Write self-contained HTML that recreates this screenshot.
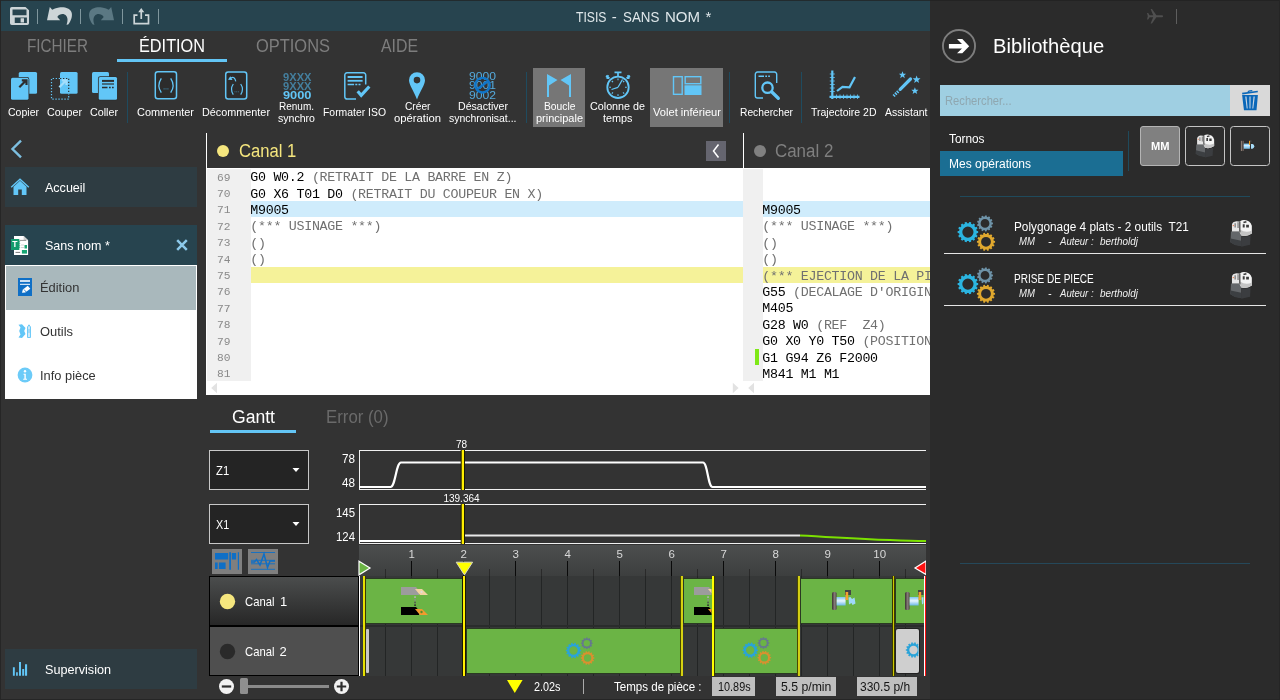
<!DOCTYPE html>
<html lang="fr"><head><meta charset="utf-8"><title>TISIS - SANS NOM *</title>
<style>
html,body{margin:0;padding:0}
body{width:1280px;height:700px;overflow:hidden;background:#333333;font-family:"Liberation Sans",sans-serif;position:relative}
.t{position:absolute;white-space:nowrap;margin:0;transform-origin:0 50%}
.r{position:absolute;display:block}
.g{position:absolute;left:0;top:0;width:0;height:0;display:block}
#app{position:absolute;left:0;top:0;width:1280px;height:700px;overflow:hidden;background:#333333;will-change:transform;-webkit-font-smoothing:antialiased}
</style></head><body><div id="app">
<header id="titlebar" class="g">
<div class="r" style="left:0px;top:0px;width:930px;height:31px;background:#27444f;"></div>
<svg class="r" style="left:10px;top:7px;" width="19" height="18" viewBox="0 0 19 18"><path fill="#cdd5d8" fill-rule="evenodd" d="M1.800 0H15.500l3.500 3.200V16.200a1.800 1.800 0 0 1-1.800 1.800H1.800A1.800 1.800 0 0 1 0 16.200V1.800A1.800 1.800 0 0 1 1.800 0zM2.500 2.400v5.850h14v-5.850zM4.750 10.500v5.600h12.150v-5.600zM10.600 11.300h3.400v4.200h-3.400z"/></svg>
<div class="r" style="left:37px;top:9px;width:1px;height:15px;background:#7f969d;"></div>
<div class="r" style="left:80px;top:9px;width:1px;height:15px;background:#7f969d;"></div>
<div class="r" style="left:122px;top:9px;width:1px;height:15px;background:#7f969d;"></div>
<div class="r" style="left:158px;top:9px;width:1px;height:15px;background:#7f969d;"></div>
<svg class="r" style="left:46px;top:6px;" width="27" height="20" viewBox="46 6 27 20"><path fill="#cdd5d8" d="M49.800 7 47 20.200H60.200L57.300 16.900C59 14.500 62 13.500 64.500 14.500 67.500 15.800 68.500 19.500 66.500 24.800L68.200 24.600C71.500 20 72.800 15.500 71.400 12 69.800 8.300 65 6.800 59 7.500 56 7.900 53.500 9 52.200 9.800Z"/></svg>
<svg class="r" style="left:88px;top:6px;" width="27" height="20" viewBox="88 6 27 20"><path fill="#5b7883" transform="translate(161,0) scale(-1,1)" d="M49.800 7 47 20.200H60.200L57.300 16.900C59 14.500 62 13.500 64.500 14.500 67.500 15.800 68.500 19.500 66.500 24.800L68.200 24.600C71.500 20 72.800 15.500 71.400 12 69.800 8.300 65 6.800 59 7.500 56 7.900 53.500 9 52.200 9.800Z"/></svg>
<svg class="r" style="left:132px;top:7px;" width="19" height="18" viewBox="0 0 19 18"><path fill="none" stroke="#cdd5d8" stroke-width="1.700" d="M5.500 8.200H2.200v8.500h14.300v-8.500h-3.500"/><path fill="#cdd5d8" d="M9.250 1 12.300 5.300h-2.200v6.700h-1.700v-6.700h-2.200z"/></svg>
<div class="t" style="left:576.00px;top:6.50px;font-size:15px;line-height:20px;color:#dfe7ea;transform:scaleX(0.8132);">TISIS</div>
<div class="t" style="left:611.80px;top:6.50px;font-size:15px;line-height:20px;color:#dfe7ea;">-</div>
<div class="t" style="left:622.70px;top:6.50px;font-size:15px;line-height:20px;color:#dfe7ea;transform:scaleX(0.8887);">SANS</div>
<div class="t" style="left:665.00px;top:6.50px;font-size:15px;line-height:20px;color:#dfe7ea;transform:scaleX(1.0001);">NOM</div>
<div class="t" style="left:705.40px;top:6.50px;font-size:15px;line-height:20px;color:#dfe7ea;">*</div>
<div class="t" style="left:27.00px;top:34.76px;font-size:18px;line-height:23px;color:#7d7d7d;transform:scaleX(0.8472);">FICHIER</div>
<div class="t" style="left:139.00px;top:34.76px;font-size:18px;line-height:23px;color:#ffffff;transform:scaleX(0.9041);">ÉDITION</div>
<div class="t" style="left:256.00px;top:34.76px;font-size:18px;line-height:23px;color:#7d7d7d;transform:scaleX(0.9135);">OPTIONS</div>
<div class="t" style="left:381.00px;top:34.76px;font-size:18px;line-height:23px;color:#7d7d7d;transform:scaleX(0.8807);">AIDE</div>
<div class="r" style="left:117px;top:59px;width:110px;height:3px;background:#63c5f5;"></div>
</header>
<nav id="ribbon" class="g">
<div class="r" style="left:533px;top:68px;width:52px;height:59px;background:#767676;"></div>
<div class="r" style="left:650px;top:68px;width:73px;height:59px;background:#767676;"></div>
<div class="r" style="left:127px;top:72px;width:1px;height:51px;background:#1f4b5f;"></div>
<div class="r" style="left:526px;top:72px;width:1px;height:51px;background:#1f4b5f;"></div>
<div class="r" style="left:729px;top:72px;width:1px;height:51px;background:#1f4b5f;"></div>
<div class="r" style="left:801px;top:72px;width:1px;height:51px;background:#1f4b5f;"></div>
<svg class="r" style="left:10px;top:71px;" width="28" height="30" viewBox="0 0 28 30"><rect x="8.75" y="1" width="18.3" height="21.700" rx="1.500" fill="#62c6f7"/><rect x="1" y="6.750" width="17.500" height="22" rx="1.500" fill="#62c6f7" stroke="#2e2e2e" stroke-width="1.600" paint-order="stroke"/><path d="M9.300 16.200 16 9.500M11.800 9.300h4.700v4.700" stroke="#2e2e2e" stroke-width="2.200" fill="none"/></svg>
<div class="t" style="left:8.00px;top:105.19px;font-size:11px;line-height:14px;color:#ffffff;transform:scaleX(0.9567);">Copier</div>
<svg class="r" style="left:50px;top:71px;" width="29" height="30" viewBox="0 0 29 30"><rect x="10" y="1" width="17.600" height="21.700" rx="1.500" fill="#62c6f7"/><path d="M10 7.500H1.500V28.100H18.700V22.700" fill="none" stroke="#62c6f7" stroke-width="1.200" stroke-dasharray="1.300 1.700"/><path d="M10 7.500H18.700V22.700" fill="none" stroke="#2e2e2e" stroke-width="1.200" stroke-dasharray="1.300 1.700"/><path d="M9.300 16.200 16 9.500M11.800 9.300h4.700v4.700" stroke="#a4defb" stroke-width="2.200" fill="none"/></svg>
<div class="t" style="left:46.50px;top:105.19px;font-size:11px;line-height:14px;color:#ffffff;transform:scaleX(0.9701);">Couper</div>
<svg class="r" style="left:91px;top:71px;" width="27" height="30" viewBox="0 0 27 30"><rect x="1" y="1" width="17" height="21" rx="1.500" fill="#62c6f7"/><rect x="7.750" y="6" width="18.300" height="22.700" rx="1.500" fill="#62c6f7" stroke="#2e2e2e" stroke-width="1.600" paint-order="stroke"/><path d="M11 9.900h12" stroke="#2e2e2e" stroke-width="2"/><path d="M11 13h12" stroke="#2e2e2e" stroke-width="1.200"/><path d="M11 16.400h5.500M18 16.400h1.700M21 16.400h1.700" stroke="#2e2e2e" stroke-width="1.500"/></svg>
<div class="t" style="left:90.00px;top:105.19px;font-size:11px;line-height:14px;color:#ffffff;transform:scaleX(0.9746);">Coller</div>
<svg class="r" style="left:153px;top:70px;" width="26" height="31" viewBox="0 0 26 31"><rect x="2.300" y="1.700" width="21.200" height="27" rx="2.500" fill="#2c2c2c" stroke="#62c6f7" stroke-width="1.500"/><path d="M8.300 8.300q-4.800 7.200 0 14.400M17.700 8.300q4.800 7.200 0 14.400" fill="none" stroke="#62c6f7" stroke-width="1.300"/><path d="M10.500 18.800h5" stroke="#3b6f88" stroke-width="1.200" stroke-dasharray="1.200 .7"/></svg>
<div class="t" style="left:137.00px;top:105.19px;font-size:11px;line-height:14px;color:#ffffff;transform:scaleX(0.9920);">Commenter</div>
<svg class="r" style="left:223px;top:70px;" width="26" height="31" viewBox="0 0 26 31"><rect x="2.700" y="2.100" width="21" height="27" rx="2.500" fill="#2c2c2c" stroke="#62c6f7" stroke-width="1.500"/><path d="M10.300 14q-3.600 5.300 0 10.600M17.700 14q3.600 5.300 0 10.600" fill="none" stroke="#62c6f7" stroke-width="1.200"/><path d="M11.500 21.800h4.500" stroke="#3b6f88" stroke-width="1" stroke-dasharray="1 .7"/><path d="M5 9.700 7.300 6.300 9.500 10z" fill="#62c6f7"/><path d="M8 8Q11.500 6 12.800 11.300" fill="none" stroke="#62c6f7" stroke-width="1.200"/></svg>
<div class="t" style="left:202.00px;top:105.19px;font-size:11px;line-height:14px;color:#ffffff;transform:scaleX(0.9844);">Décommenter</div>
<div class="t" style="left:282.50px;top:69.69px;font-size:11px;line-height:14px;color:#447f9e;transform:scaleX(1.0132);font-weight:700;">9XXX</div>
<div class="t" style="left:282.50px;top:78.99px;font-size:11px;line-height:14px;color:#447f9e;transform:scaleX(1.0132);font-weight:700;">9XXX</div>
<div class="t" style="left:282.50px;top:88.39px;font-size:11px;line-height:14px;color:#62c6f7;transform:scaleX(1.1646);font-weight:700;">9000</div>
<div class="t" style="left:279.00px;top:98.79px;font-size:11px;line-height:14px;color:#ffffff;transform:scaleX(0.9087);">Renum.</div>
<div class="t" style="left:278.00px;top:110.79px;font-size:11px;line-height:14px;color:#ffffff;transform:scaleX(0.9606);">synchro</div>
<svg class="r" style="left:343px;top:70px;" width="29" height="31" viewBox="0 0 29 31"><path d="M13 29H4a2.200 2.200 0 0 1-2.200-2.200V5A2.200 2.200 0 0 1 4 2.800h16.500a2.200 2.200 0 0 1 2.200 2.200V14.500" fill="none" stroke="#62c6f7" stroke-width="1.500"/><path d="M4.600 7h15" stroke="#62c6f7" stroke-width="2"/><path d="M4.600 10.800h15" stroke="#62c6f7" stroke-width="1.800"/><path d="M4.600 14.500h6.500M12.300 14.500h2M15.500 14.500h2" stroke="#62c6f7" stroke-width="1.600"/><path d="M14.700 21.300 18.200 25.300 26.300 16.500" fill="none" stroke="#62c6f7" stroke-width="3.200"/></svg>
<div class="t" style="left:323.00px;top:105.19px;font-size:11px;line-height:14px;color:#ffffff;transform:scaleX(0.9456);">Formater ISO</div>
<svg class="r" style="left:408px;top:71px;" width="18" height="30" viewBox="0 0 18 30"><path fill-rule="evenodd" fill="#62c6f7" d="M9 1.200a8 8 0 0 1 8 8c0 4.500-5 11-8 19.300C6 20.200 1 13.700 1 9.200a8 8 0 0 1 8-8zm0 4.600a3.300 3.300 0 1 0 0 6.600 3.300 3.300 0 0 0 0-6.600z"/></svg>
<div class="t" style="left:404.50px;top:98.79px;font-size:11px;line-height:14px;color:#ffffff;transform:scaleX(0.9271);">Créer</div>
<div class="t" style="left:394.00px;top:110.79px;font-size:11px;line-height:14px;color:#ffffff;transform:scaleX(1.0246);">opération</div>
<div class="t" style="left:469.00px;top:68.72px;font-size:11.5px;line-height:15px;color:#55aadc;transform:scaleX(1.0554);">9000</div>
<div class="t" style="left:469.00px;top:78.12px;font-size:11.5px;line-height:15px;color:#55aadc;transform:scaleX(1.0554);">9001</div>
<div class="t" style="left:469.00px;top:87.52px;font-size:11.5px;line-height:15px;color:#55aadc;transform:scaleX(1.0554);">9002</div>
<svg class="r" style="left:473px;top:76px;" width="19" height="19" viewBox="0 0 19 19"><circle cx="9.500" cy="9.200" r="7.300" fill="none" stroke="#0f75c8" stroke-width="2.300"/><path d="M4.500 13 14.500 5.500" stroke="#0f75c8" stroke-width="2.300"/></svg>
<div class="t" style="left:457.50px;top:98.79px;font-size:11px;line-height:14px;color:#ffffff;transform:scaleX(0.9623);">Désactiver</div>
<div class="t" style="left:448.50px;top:110.79px;font-size:11px;line-height:14px;color:#ffffff;transform:scaleX(0.9518);">synchronisat...</div>
<svg class="r" style="left:546px;top:73px;" width="26" height="25" viewBox="0 0 26 25"><path fill="#62c6f7" d="M1 1l10.500 6L3 12.500V24H1zM25 1 14.500 7 23 12.500V24h2z"/></svg>
<div class="t" style="left:543.50px;top:98.79px;font-size:11px;line-height:14px;color:#ffffff;transform:scaleX(0.9366);">Boucle</div>
<div class="t" style="left:535.50px;top:110.79px;font-size:11px;line-height:14px;color:#ffffff;transform:scaleX(0.9982);">principale</div>
<svg class="r" style="left:604px;top:70px;" width="28" height="31" viewBox="0 0 28 31"><circle cx="14" cy="17.300" r="10.700" fill="none" stroke="#62c6f7" stroke-width="1.800"/><path d="M10.500 2.300h7M14 2.300v4.500M4.300 5.200l-1.800 3.300M2 5.800l3.500 2.500M23.700 5.200l1.800 3.300M26 5.800l-3.500 2.500" stroke="#62c6f7" stroke-width="1.700" fill="none"/><path d="M14 17.300 18.500 9.500M14 17.300 7.500 19.500" stroke="#62c6f7" stroke-width="1.300" fill="none"/><path d="M14 8.500v1.800M14 24.300v1.800M5.200 17.300h1.800M21 17.300h1.800M7.800 11l1.200 1.200M20.200 11 19 12.200M7.800 23.600 9 22.400M20.200 23.600 19 22.400" stroke="#62c6f7" stroke-width="1.100"/></svg>
<div class="t" style="left:590.00px;top:98.79px;font-size:11px;line-height:14px;color:#ffffff;transform:scaleX(0.9775);">Colonne de</div>
<div class="t" style="left:603.00px;top:110.79px;font-size:11px;line-height:14px;color:#ffffff;transform:scaleX(0.9848);">temps</div>
<svg class="r" style="left:672px;top:75px;" width="31" height="21" viewBox="0 0 31 21"><rect x="1.500" y="1.700" width="8.700" height="17.600" fill="none" stroke="#62c6f7" stroke-width="1.400"/><rect x="13.200" y="1.700" width="15.600" height="7" fill="none" stroke="#62c6f7" stroke-width="1.400"/><rect x="12.500" y="10.300" width="17" height="9.700" fill="#62c6f7"/></svg>
<div class="t" style="left:653.00px;top:105.19px;font-size:11px;line-height:14px;color:#ffffff;transform:scaleX(1.0110);">Volet inférieur</div>
<svg class="r" style="left:753px;top:70px;" width="28" height="31" viewBox="0 0 28 31"><path d="M10 28H4.500a2.200 2.200 0 0 1-2.200-2.200V4.200A2.200 2.200 0 0 1 4.500 2h17a2.200 2.200 0 0 1 2.200 2.200V13" fill="none" stroke="#62c6f7" stroke-width="1.400"/><path d="M5.500 6.200h5.500M12.300 6.200h1.700M15.200 6.200h1.700" stroke="#62c6f7" stroke-width="1.600"/><circle cx="14.500" cy="17.700" r="5.200" fill="none" stroke="#62c6f7" stroke-width="2.300"/><path d="M18.600 21.800 25.300 28.300" stroke="#62c6f7" stroke-width="3.300" stroke-linecap="round"/></svg>
<div class="t" style="left:739.50px;top:105.19px;font-size:11px;line-height:14px;color:#ffffff;transform:scaleX(0.9321);">Rechercher</div>
<svg class="r" style="left:828px;top:69px;" width="33" height="32" viewBox="0 0 33 32"><path d="M4.300 1.500v28.500M1.500 27.800h30" stroke="#62c6f7" stroke-width="2.200" fill="none"/><path d="M1.800 5h5M1.800 8.500h5M1.800 12h5M1.800 15.500h5M1.800 19h5M1.800 22.500h5M8.500 25.500v4.500M12 25.500v4.500M15.500 25.500v4.500M19 25.500v4.500M22.500 25.500v4.500M26 25.500v4.500M29.500 25.500v4.500" stroke="#62c6f7" stroke-width="1" opacity=".8"/><path d="M9 22 14.500 17.800l7 .500L27 8" fill="none" stroke="#62c6f7" stroke-width="2.200"/></svg>
<div class="t" style="left:811.00px;top:105.19px;font-size:11px;line-height:14px;color:#ffffff;transform:scaleX(0.9538);">Trajectoire 2D</div>
<svg class="r" style="left:890px;top:71px;" width="32" height="29" viewBox="0 0 32 29"><path d="M3.600 25 9 19.600" stroke="#62c6f7" stroke-width="3" stroke-dasharray="1.500 1"/><path d="M10.200 18.400 20.500 8" stroke="#62c6f7" stroke-width="3.200" stroke-linecap="round"/><path fill="#62c6f7" d="M0-3 .8-.9 3-.9 1.300.5 1.900 2.700 0 1.400-1.900 2.700-1.300.5-3-.9-.8-.9z" transform="translate(12.500,3.900) scale(1.200)"/><path fill="#62c6f7" d="M0-3 .8-.9 3-.9 1.300.5 1.900 2.700 0 1.400-1.900 2.700-1.300.5-3-.9-.8-.9z" transform="translate(26.600,8.500) scale(1.300)"/><path fill="#62c6f7" d="M0-3 .8-.9 3-.9 1.300.5 1.900 2.700 0 1.400-1.900 2.700-1.300.5-3-.9-.8-.9z" transform="translate(24.900,19.800) scale(1.200)"/></svg>
<div class="t" style="left:885.00px;top:105.19px;font-size:11px;line-height:14px;color:#ffffff;transform:scaleX(0.9523);">Assistant</div>
</nav>
<nav id="sidebar" class="g">
<svg class="r" style="left:9px;top:138px;" width="16" height="22" viewBox="0 0 16 22"><path d="M12 2.700 3.500 11l8.500 8.300" fill="none" stroke="#7dbfe0" stroke-width="2.400"/></svg>
<div class="r" style="left:5px;top:167px;width:192px;height:40px;background:#2e3c42;"></div>
<svg class="r" style="left:10px;top:178px;" width="20" height="18" viewBox="0 0 20 18"><path fill="#62c6f7" d="M10 2.800 3.500 8.800V17h4.700v-5.500h3.600V17h4.700V8.800z"/><path d="M1.200 9.300 10 1.300l8.800 8" fill="none" stroke="#62c6f7" stroke-width="1.400"/></svg>
<div class="t" style="left:45.20px;top:179.20px;font-size:13px;line-height:17px;color:#ffffff;transform:scaleX(0.9640);">Accueil</div>
<div class="r" style="left:5px;top:225px;width:192px;height:40px;background:#27444f;"></div>
<svg class="r" style="left:10px;top:235px;" width="19" height="21" viewBox="0 0 19 21"><path d="M4 1h9.600l4.500 4.300V20H4z" fill="#fff"/><path d="M13.600 1v4.300h4.500z" fill="#cfcfcf"/><rect x="1" y="4" width="8.300" height="11" fill="#139b6d"/><path d="M9.300 5.500l1 .8-1 1 1 1-1 1 1 1-1 1 1 1-1 1z" fill="#139b6d"/><path d="M9.800 5.400h6.400" stroke="#7a7a7a" stroke-width=".8"/><path d="M11 10h3M11 12.500h3" stroke="#c8c8c8" stroke-width=".8"/><path d="M5.500 17.400h4.600" stroke="#7a7a7a" stroke-width="1"/><path d="M11.900 15h5.100v3.600h-5.100z" fill="#17a673"/><path d="M14.500 10h2.500v3.500h-2.500z" fill="#17a673"/></svg>
<div class="t" style="left:12.30px;top:239.15px;font-size:8.5px;line-height:11px;color:#ffffff;font-weight:700;">T</div>
<div class="t" style="left:45.20px;top:237.00px;font-size:13px;line-height:17px;color:#ffffff;transform:scaleX(0.9642);">Sans nom *</div>
<svg class="r" style="left:175px;top:238px;" width="14" height="14" viewBox="0 0 14 14"><path d="M2.200 2.200 11.800 11.800M11.800 2.200 2.200 11.800" stroke="#8cc9ea" stroke-width="2.500"/></svg>
<div class="r" style="left:5px;top:265px;width:192px;height:134px;background:#ffffff;"></div>
<div class="r" style="left:6px;top:266px;width:190px;height:44px;background:#a9b8bc;"></div>
<svg class="r" style="left:18px;top:278px;" width="14" height="18" viewBox="0 0 14 18"><rect width="14" height="18" fill="#0f6fc6"/><path d="M2 3h10" stroke="#fff" stroke-width="1.600"/><path d="M2 6.300h10" stroke="#fff" stroke-width="1"/><path d="M4 14.800 4.800 11.600 9.800 7.800 12.300 10.800 7.300 14.600z" fill="#fff"/><path d="M6 11.500 8.200 14" stroke="#0f6fc6" stroke-width=".8"/></svg>
<div class="t" style="left:40.00px;top:279.00px;font-size:13px;line-height:17px;color:#333333;transform:scaleX(0.9912);">Édition</div>
<svg class="r" style="left:18px;top:324px;" width="15" height="15" viewBox="0 0 15 15"><path d="M.5.800 4 .2 7.500 4 6.200 7 7.500 10 4 14 .5 13.500 2.500 10.500 1.200 7 2.500 3.500z" fill="#62c6f7"/><path d="M9.500 3 11 .8 12.500 3v10.500h-3z" fill="#cfeaf9" stroke="#62c6f7" stroke-width=".9"/><path d="M11 5v4" stroke="#62c6f7" stroke-width=".8"/></svg>
<div class="t" style="left:40.00px;top:323.00px;font-size:13px;line-height:17px;color:#333333;transform:scaleX(0.9931);">Outils</div>
<svg class="r" style="left:17px;top:367px;" width="16" height="16" viewBox="0 0 16 16"><circle cx="8" cy="8" r="7.400" fill="#6ccbf8"/><circle cx="8" cy="4.300" r="1.200" fill="#fff"/><path d="M6.500 6.800h2.300v5h1.200v1h-3.800v-1h1.200v-4h-.9z" fill="#fff"/></svg>
<div class="t" style="left:40.30px;top:366.60px;font-size:13px;line-height:17px;color:#333333;transform:scaleX(0.9880);">Info pièce</div>
<div class="r" style="left:5px;top:649px;width:192px;height:40px;background:#2e3c42;"></div>
<svg class="r" style="left:12px;top:660px;" width="16" height="18" viewBox="0 0 16 18"><path fill="#62c6f7" d="M.9 7.200h1.900v8.600H.9zM4.100 12.300h1.700v3.500H4.100zM7 2h2v13.800H7zM10.200 9h2v6.800h-2zM13 4.200h2.100v11.600H13z"/></svg>
<div class="t" style="left:45.00px;top:660.80px;font-size:13px;line-height:17px;color:#ffffff;transform:scaleX(0.9716);">Supervision</div>
</nav>
<main id="editors" class="g">
<div class="r" style="left:206px;top:133px;width:1px;height:262px;background:#ffffff;"></div>
<div class="r" style="left:207px;top:168px;width:536px;height:227px;background:#ffffff;"></div>
<div class="r" style="left:207px;top:169px;width:44px;height:212px;background:#f0f0f0;"></div>
<div class="r" style="left:251px;top:201.0px;width:492px;height:16.4px;background:#cfecfc;"></div>
<div class="r" style="left:251px;top:266.59999999999997px;width:492px;height:16.4px;background:#f5f299;"></div>
<svg class="r" style="left:216px;top:144px;" width="14" height="14" viewBox="0 0 14 14"><circle cx="7" cy="7" r="6" fill="#f5e67e"/></svg>
<div class="t" style="left:239.20px;top:139.56px;font-size:18px;line-height:23px;color:#f5e67e;transform:scaleX(0.9236);">Canal 1</div>
<div class="r" style="left:706px;top:141px;width:20px;height:20px;background:#65656f;"></div>
<svg class="r" style="left:706px;top:141px;" width="20" height="20" viewBox="0 0 20 20"><path d="M12.500 3.500 7.500 10l5 6.500" fill="none" stroke="#fff" stroke-width="1.500"/></svg>
<div class="t" style="left:217.00px;top:170.56px;font-size:11.4px;line-height:15px;color:#8a8a8a;transform:scaleX(0.9867);font-family:'Liberation Mono',monospace;">69</div>
<div class="t" style="left:217.00px;top:186.96px;font-size:11.4px;line-height:15px;color:#8a8a8a;transform:scaleX(0.9867);font-family:'Liberation Mono',monospace;">70</div>
<div class="t" style="left:217.00px;top:203.36px;font-size:11.4px;line-height:15px;color:#8a8a8a;transform:scaleX(0.9867);font-family:'Liberation Mono',monospace;">71</div>
<div class="t" style="left:217.00px;top:219.76px;font-size:11.4px;line-height:15px;color:#8a8a8a;transform:scaleX(0.9867);font-family:'Liberation Mono',monospace;">72</div>
<div class="t" style="left:217.00px;top:236.16px;font-size:11.4px;line-height:15px;color:#8a8a8a;transform:scaleX(0.9867);font-family:'Liberation Mono',monospace;">73</div>
<div class="t" style="left:217.00px;top:252.56px;font-size:11.4px;line-height:15px;color:#8a8a8a;transform:scaleX(0.9867);font-family:'Liberation Mono',monospace;">74</div>
<div class="t" style="left:217.00px;top:268.96px;font-size:11.4px;line-height:15px;color:#8a8a8a;transform:scaleX(0.9867);font-family:'Liberation Mono',monospace;">75</div>
<div class="t" style="left:217.00px;top:285.36px;font-size:11.4px;line-height:15px;color:#8a8a8a;transform:scaleX(0.9867);font-family:'Liberation Mono',monospace;">76</div>
<div class="t" style="left:217.00px;top:301.76px;font-size:11.4px;line-height:15px;color:#8a8a8a;transform:scaleX(0.9867);font-family:'Liberation Mono',monospace;">77</div>
<div class="t" style="left:217.00px;top:318.16px;font-size:11.4px;line-height:15px;color:#8a8a8a;transform:scaleX(0.9867);font-family:'Liberation Mono',monospace;">78</div>
<div class="t" style="left:217.00px;top:334.56px;font-size:11.4px;line-height:15px;color:#8a8a8a;transform:scaleX(0.9867);font-family:'Liberation Mono',monospace;">79</div>
<div class="t" style="left:217.00px;top:350.96px;font-size:11.4px;line-height:15px;color:#8a8a8a;transform:scaleX(0.9867);font-family:'Liberation Mono',monospace;">80</div>
<div class="t" style="left:217.00px;top:367.36px;font-size:11.4px;line-height:15px;color:#8a8a8a;transform:scaleX(0.9867);font-family:'Liberation Mono',monospace;">81</div>
<div class="t" style="left:250.30px;top:169.15px;font-size:13.3px;line-height:17px;color:#000000;font-family:'Liberation Mono',monospace;letter-spacing:-0.28px;white-space:pre;">G0 W0.2 </div>
<div class="t" style="left:311.90px;top:169.15px;font-size:13.3px;line-height:17px;color:#707070;font-family:'Liberation Mono',monospace;letter-spacing:-0.28px;white-space:pre;">(RETRAIT DE LA BARRE EN Z)</div>
<div class="t" style="left:250.30px;top:185.55px;font-size:13.3px;line-height:17px;color:#000000;font-family:'Liberation Mono',monospace;letter-spacing:-0.28px;white-space:pre;">G0 X6 T01 D0 </div>
<div class="t" style="left:350.40px;top:185.55px;font-size:13.3px;line-height:17px;color:#707070;font-family:'Liberation Mono',monospace;letter-spacing:-0.28px;white-space:pre;">(RETRAIT DU COUPEUR EN X)</div>
<div class="t" style="left:250.30px;top:201.95px;font-size:13.3px;line-height:17px;color:#000000;font-family:'Liberation Mono',monospace;letter-spacing:-0.28px;white-space:pre;">M9005</div>
<div class="t" style="left:250.30px;top:218.35px;font-size:13.3px;line-height:17px;color:#707070;font-family:'Liberation Mono',monospace;letter-spacing:-0.28px;white-space:pre;">(*** USINAGE ***)</div>
<div class="t" style="left:250.30px;top:234.75px;font-size:13.3px;line-height:17px;color:#707070;font-family:'Liberation Mono',monospace;letter-spacing:-0.28px;white-space:pre;">()</div>
<div class="t" style="left:250.30px;top:251.15px;font-size:13.3px;line-height:17px;color:#707070;font-family:'Liberation Mono',monospace;letter-spacing:-0.28px;white-space:pre;">()</div>
<svg class="r" style="left:210px;top:382px;" width="8" height="12" viewBox="0 0 8 12"><path d="M7 .8 1.200 6l5.800 5.200z" fill="#e2e2e2"/></svg>
<div class="r" style="left:743px;top:133px;width:1px;height:35px;background:#ffffff;"></div>
<div class="r" style="left:743px;top:168px;width:187px;height:227px;background:#ffffff;"></div>
<div class="r" style="left:743px;top:169px;width:20px;height:212px;background:#f0f0f0;"></div>
<div class="r" style="left:763px;top:201.0px;width:167px;height:16.4px;background:#cfecfc;"></div>
<div class="r" style="left:763px;top:266.59999999999997px;width:167px;height:16.4px;background:#f5f299;"></div>
<svg class="r" style="left:753px;top:144px;" width="14" height="14" viewBox="0 0 14 14"><circle cx="7" cy="7" r="6" fill="#808080"/></svg>
<div class="t" style="left:775.20px;top:139.56px;font-size:18px;line-height:23px;color:#7f7f7f;transform:scaleX(0.9397);">Canal 2</div>
<div class="r" style="left:762px;top:168px;width:168px;height:227px;overflow:hidden">
<div class="t" style="left:0.30px;top:33.95px;font-size:13.3px;line-height:17px;color:#000000;font-family:'Liberation Mono',monospace;letter-spacing:-0.28px;white-space:pre;">M9005</div>
<div class="t" style="left:0.30px;top:50.35px;font-size:13.3px;line-height:17px;color:#707070;font-family:'Liberation Mono',monospace;letter-spacing:-0.28px;white-space:pre;">(*** USINAGE ***)</div>
<div class="t" style="left:0.30px;top:66.75px;font-size:13.3px;line-height:17px;color:#707070;font-family:'Liberation Mono',monospace;letter-spacing:-0.28px;white-space:pre;">()</div>
<div class="t" style="left:0.30px;top:83.15px;font-size:13.3px;line-height:17px;color:#707070;font-family:'Liberation Mono',monospace;letter-spacing:-0.28px;white-space:pre;">()</div>
<div class="t" style="left:0.30px;top:99.55px;font-size:13.3px;line-height:17px;color:#707070;font-family:'Liberation Mono',monospace;letter-spacing:-0.28px;white-space:pre;">(*** EJECTION DE LA PIECE ***)</div>
<div class="t" style="left:0.30px;top:115.95px;font-size:13.3px;line-height:17px;color:#000000;font-family:'Liberation Mono',monospace;letter-spacing:-0.28px;white-space:pre;">G55 </div>
<div class="t" style="left:31.10px;top:115.95px;font-size:13.3px;line-height:17px;color:#707070;font-family:'Liberation Mono',monospace;letter-spacing:-0.28px;white-space:pre;">(DECALAGE D'ORIGINE)</div>
<div class="t" style="left:0.30px;top:132.35px;font-size:13.3px;line-height:17px;color:#000000;font-family:'Liberation Mono',monospace;letter-spacing:-0.28px;white-space:pre;">M405</div>
<div class="t" style="left:0.30px;top:148.75px;font-size:13.3px;line-height:17px;color:#000000;font-family:'Liberation Mono',monospace;letter-spacing:-0.28px;white-space:pre;">G28 W0 </div>
<div class="t" style="left:54.20px;top:148.75px;font-size:13.3px;line-height:17px;color:#707070;font-family:'Liberation Mono',monospace;letter-spacing:-0.28px;white-space:pre;">(REF  Z4)</div>
<div class="t" style="left:0.30px;top:165.15px;font-size:13.3px;line-height:17px;color:#000000;font-family:'Liberation Mono',monospace;letter-spacing:-0.28px;white-space:pre;">G0 X0 Y0 T50 </div>
<div class="t" style="left:100.40px;top:165.15px;font-size:13.3px;line-height:17px;color:#707070;font-family:'Liberation Mono',monospace;letter-spacing:-0.28px;white-space:pre;">(POSITIONNEMENT)</div>
<div class="t" style="left:0.30px;top:181.55px;font-size:13.3px;line-height:17px;color:#000000;font-family:'Liberation Mono',monospace;letter-spacing:-0.28px;white-space:pre;">G1 G94 Z6 F2000</div>
<div class="t" style="left:0.30px;top:197.95px;font-size:13.3px;line-height:17px;color:#000000;font-family:'Liberation Mono',monospace;letter-spacing:-0.28px;white-space:pre;">M841 M1 M1</div>
</div>
<div class="r" style="left:755px;top:348.59999999999997px;width:4px;height:16.4px;background:#7fe817;"></div>
<svg class="r" style="left:731.5px;top:382px;" width="8" height="12" viewBox="0 0 8 12"><path d="M.8 .8l5.800 5.200-5.800 5.200z" fill="#e2e2e2"/></svg>
<svg class="r" style="left:747px;top:382px;" width="8" height="12" viewBox="0 0 8 12"><path d="M7 .8 1.200 6l5.800 5.200z" fill="#e2e2e2"/></svg>
</main>
<section id="gantt" class="g">
<div class="t" style="left:231.50px;top:405.96px;font-size:18px;line-height:23px;color:#ffffff;transform:scaleX(0.9767);">Gantt</div>
<div class="t" style="left:325.50px;top:405.96px;font-size:18px;line-height:23px;color:#6a6a6a;transform:scaleX(0.9328);">Error (0)</div>
<div class="r" style="left:210px;top:430px;width:86px;height:3px;background:#63c5f5;"></div>
<div class="r" style="left:209px;top:450px;width:100px;height:40px;background:#242424;box-sizing:border-box;border:1px solid #c8c8c8;"></div>
<div class="t" style="left:215.50px;top:461.50px;font-size:13px;line-height:17px;color:#ffffff;transform:scaleX(0.8701);">Z1</div>
<svg class="r" style="left:292px;top:467px;" width="8" height="6" viewBox="0 0 8 6"><path d="M.5 1h7L4 5z" fill="#fff"/></svg>
<div class="r" style="left:209px;top:504px;width:100px;height:40px;background:#242424;box-sizing:border-box;border:1px solid #c8c8c8;"></div>
<div class="t" style="left:215.50px;top:515.50px;font-size:13px;line-height:17px;color:#ffffff;transform:scaleX(0.8301);">X1</div>
<svg class="r" style="left:292px;top:521px;" width="8" height="6" viewBox="0 0 8 6"><path d="M.5 1h7L4 5z" fill="#fff"/></svg>
<div class="t" style="left:342.00px;top:451.34px;font-size:12px;line-height:16px;color:#ffffff;transform:scaleX(0.9739);">78</div>
<div class="t" style="left:342.00px;top:475.04px;font-size:12px;line-height:16px;color:#ffffff;transform:scaleX(0.9739);">48</div>
<div class="t" style="left:336.00px;top:505.34px;font-size:12px;line-height:16px;color:#ffffff;transform:scaleX(0.9490);">145</div>
<div class="t" style="left:336.00px;top:528.84px;font-size:12px;line-height:16px;color:#ffffff;transform:scaleX(0.9490);">124</div>
<div class="t" style="left:455.94px;top:438.03px;font-size:10px;line-height:13px;color:#ffffff;">78</div>
<div class="t" style="left:443.43px;top:492.03px;font-size:10px;line-height:13px;color:#ffffff;">139.364</div>
<svg class="r" style="left:359px;top:450px;" width="567" height="94" viewBox="0 0 567 94"><path d="M0 .5h567M0 39.500h567M.5 0v40" stroke="#f0f0f0" stroke-width="1" fill="none"/><path d="M0 37h31.500c5 0 5.500-24.500 10.500-24.500h302c4.500 0 5 24.500 9.500 24.500H567" fill="none" stroke="#fff" stroke-width="2.200"/><path d="M0 54.500h567M0 93.500h567M.5 54v40" stroke="#f0f0f0" stroke-width="1" fill="none"/><path d="M0 91h103.500" stroke="#fff" stroke-width="2.200"/><path d="M103.500 85.500H441" stroke="#e8e8e8" stroke-width="2.200"/><path d="M441 85.500C490 88 530 91 567 91" fill="none" stroke="#7be000" stroke-width="2.200"/><rect x="101.700" y="0" width="4.300" height="40" fill="#1a1a00"/><rect x="102.700" y="0" width="2.300" height="40" fill="#ffee00"/><rect x="101.700" y="54" width="4.300" height="40" fill="#1a1a00"/><rect x="102.700" y="54" width="2.300" height="40" fill="#ffee00"/></svg>
<div class="r" style="left:212px;top:549px;width:30px;height:25px;background:#7f7f7f;"></div>
<div class="r" style="left:248px;top:549px;width:30px;height:25px;background:#7f7f7f;"></div>
<svg class="r" style="left:212px;top:549px;" width="30" height="25" viewBox="0 0 30 25"><path fill="#0f6fc6" d="M3 3.900h13.200v6.700H3zM3 13.500h2.700V20H3zM6.900 13.500h6.700V20H6.900zM17.200 3.200H19v17.600h-1.800zM19.800 3.900h4.300v6.700h-4.300zM25.800 3.200H27v17.600h-1.200z"/></svg>
<svg class="r" style="left:248px;top:549px;" width="30" height="25" viewBox="0 0 30 25"><path d="M3 3.500h24M3 20.300h24M3 11.300h24M3 14.800h24" stroke="#0f6fc6" stroke-width=".9"/><path d="M3 13h3.500l2-2.500 3.500 5.500 4-11 3.500 13.500 2.500-6.500H27" fill="none" stroke="#0f6fc6" stroke-width="1.500"/></svg>
<div class="r" style="left:209px;top:576px;width:150px;height:50px;background:#000;"></div>
<div class="r" style="left:209px;top:626px;width:150px;height:50px;background:#000;"></div>
<div class="r" style="left:210px;top:577px;width:148px;height:48px;background:linear-gradient(#4b4d4d,#272727);"></div>
<div class="r" style="left:210px;top:627px;width:148px;height:48px;background:#4f4f4f;"></div>
<svg class="r" style="left:219px;top:593px;" width="17" height="17" viewBox="0 0 17 17"><circle cx="8.500" cy="8.500" r="7.700" fill="#f5e67e"/></svg>
<svg class="r" style="left:219px;top:643px;" width="17" height="17" viewBox="0 0 17 17"><circle cx="8.500" cy="8.500" r="7.700" fill="#2a2a2a"/></svg>
<div class="t" style="left:245.00px;top:593.00px;font-size:13px;line-height:17px;color:#ffffff;transform:scaleX(0.8685);">Canal</div>
<div class="t" style="left:280.00px;top:593.00px;font-size:13px;line-height:17px;color:#ffffff;">1</div>
<div class="t" style="left:245.00px;top:643.00px;font-size:13px;line-height:17px;color:#ffffff;transform:scaleX(0.8685);">Canal</div>
<div class="t" style="left:279.50px;top:643.00px;font-size:13px;line-height:17px;color:#ffffff;">2</div>
<div class="r" style="left:359px;top:545px;width:567px;height:31px;background:linear-gradient(#4c4e4e,#3d3f3f);"></div>
<div class="r" style="left:359px;top:576px;width:567px;height:100px;background:#363838;"></div>
<svg class="r" style="left:359px;top:545px;" width="567" height="131" viewBox="0 0 567 131"><path d="M26.5 31v100" stroke="#232525" stroke-width="1"/><path d="M26.5 24v7" stroke="#2a2a2a" stroke-width="1"/><path d="M52.5 31v100" stroke="#232525" stroke-width="1"/><path d="M52.5 16v15" stroke="#0a0a0a" stroke-width="1"/><path d="M78.5 31v100" stroke="#232525" stroke-width="1"/><path d="M78.5 24v7" stroke="#2a2a2a" stroke-width="1"/><path d="M104.5 31v100" stroke="#232525" stroke-width="1"/><path d="M104.5 16v15" stroke="#0a0a0a" stroke-width="1"/><path d="M130.5 31v100" stroke="#232525" stroke-width="1"/><path d="M130.5 24v7" stroke="#2a2a2a" stroke-width="1"/><path d="M156.5 31v100" stroke="#232525" stroke-width="1"/><path d="M156.5 16v15" stroke="#0a0a0a" stroke-width="1"/><path d="M182.5 31v100" stroke="#232525" stroke-width="1"/><path d="M182.5 24v7" stroke="#2a2a2a" stroke-width="1"/><path d="M208.5 31v100" stroke="#232525" stroke-width="1"/><path d="M208.5 16v15" stroke="#0a0a0a" stroke-width="1"/><path d="M234.5 31v100" stroke="#232525" stroke-width="1"/><path d="M234.5 24v7" stroke="#2a2a2a" stroke-width="1"/><path d="M260.5 31v100" stroke="#232525" stroke-width="1"/><path d="M260.5 16v15" stroke="#0a0a0a" stroke-width="1"/><path d="M286.5 31v100" stroke="#232525" stroke-width="1"/><path d="M286.5 24v7" stroke="#2a2a2a" stroke-width="1"/><path d="M312.5 31v100" stroke="#232525" stroke-width="1"/><path d="M312.5 16v15" stroke="#0a0a0a" stroke-width="1"/><path d="M338.5 31v100" stroke="#232525" stroke-width="1"/><path d="M338.5 24v7" stroke="#2a2a2a" stroke-width="1"/><path d="M364.5 31v100" stroke="#232525" stroke-width="1"/><path d="M364.5 16v15" stroke="#0a0a0a" stroke-width="1"/><path d="M390.5 31v100" stroke="#232525" stroke-width="1"/><path d="M390.5 24v7" stroke="#2a2a2a" stroke-width="1"/><path d="M416.5 31v100" stroke="#232525" stroke-width="1"/><path d="M416.5 16v15" stroke="#0a0a0a" stroke-width="1"/><path d="M442.5 31v100" stroke="#232525" stroke-width="1"/><path d="M442.5 24v7" stroke="#2a2a2a" stroke-width="1"/><path d="M468.5 31v100" stroke="#232525" stroke-width="1"/><path d="M468.5 16v15" stroke="#0a0a0a" stroke-width="1"/><path d="M494.5 31v100" stroke="#232525" stroke-width="1"/><path d="M494.5 24v7" stroke="#2a2a2a" stroke-width="1"/><path d="M520.5 31v100" stroke="#232525" stroke-width="1"/><path d="M520.5 16v15" stroke="#0a0a0a" stroke-width="1"/><path d="M546.5 31v100" stroke="#232525" stroke-width="1"/><path d="M546.5 24v7" stroke="#2a2a2a" stroke-width="1"/><path d="M0 81h567" stroke="#2a2c2c" stroke-width="2"/></svg>
<div class="t" style="left:408.50px;top:546.82px;font-size:11.5px;line-height:15px;color:#d8d8d8;">1</div>
<div class="t" style="left:460.50px;top:546.82px;font-size:11.5px;line-height:15px;color:#d8d8d8;">2</div>
<div class="t" style="left:512.50px;top:546.82px;font-size:11.5px;line-height:15px;color:#d8d8d8;">3</div>
<div class="t" style="left:564.50px;top:546.82px;font-size:11.5px;line-height:15px;color:#d8d8d8;">4</div>
<div class="t" style="left:616.50px;top:546.82px;font-size:11.5px;line-height:15px;color:#d8d8d8;">5</div>
<div class="t" style="left:668.50px;top:546.82px;font-size:11.5px;line-height:15px;color:#d8d8d8;">6</div>
<div class="t" style="left:720.50px;top:546.82px;font-size:11.5px;line-height:15px;color:#d8d8d8;">7</div>
<div class="t" style="left:772.50px;top:546.82px;font-size:11.5px;line-height:15px;color:#d8d8d8;">8</div>
<div class="t" style="left:824.50px;top:546.82px;font-size:11.5px;line-height:15px;color:#d8d8d8;">9</div>
<div class="t" style="left:873.30px;top:546.82px;font-size:11.5px;line-height:15px;color:#d8d8d8;">10</div>
<div class="r" style="left:366px;top:579px;width:96px;height:44px;background:#6bb445;box-shadow:0 0 0 1px #2a3a22;"></div>
<div class="r" style="left:683.5px;top:579px;width:28.5px;height:44px;background:#6bb445;box-shadow:0 0 0 1px #2a3a22;"></div>
<div class="r" style="left:800.5px;top:579px;width:91.5px;height:44px;background:#6bb445;box-shadow:0 0 0 1px #2a3a22;"></div>
<div class="r" style="left:895.5px;top:579px;width:28.5px;height:44px;background:#6bb445;box-shadow:0 0 0 1px #2a3a22;"></div>
<div class="r" style="left:467px;top:629px;width:213px;height:44px;background:#6bb445;box-shadow:0 0 0 1px #2a3a22;"></div>
<div class="r" style="left:715px;top:629px;width:82.5px;height:44px;background:#6bb445;box-shadow:0 0 0 1px #2a3a22;"></div>
<div class="r" style="left:895.5px;top:629px;width:23.5px;height:44px;background:#cfcfcf;border-radius:2px;box-shadow:0 0 0 1px #222;"></div>
<div class="r" style="left:366px;top:629px;width:2.5px;height:44px;background:#c8c8c8;border-radius:1px;"></div>
<svg class="r" style="left:359px;top:575px;" width="567" height="101" viewBox="0 0 567 101"><path d="M42 12h15l3 3.500v4.500h-18z" fill="#9c9c9c"/><path d="M56 14h7l6 6h-8z" fill="#f2d3a2"/><circle cx="62.5" cy="17" r="1.100" fill="#ddd"/><rect x="55.2" y="21.3" width="1.700" height="1.600" fill="#b4b4b4"/><rect x="55.2" y="24" width="1.700" height="1.600" fill="#8c8c8c"/><rect x="55.2" y="26.7" width="1.700" height="1.600" fill="#555"/><rect x="55.2" y="29.4" width="1.700" height="1.600" fill="#333"/><path d="M42 32h15l3 3.500v4.500h-18z" fill="#000"/><path d="M56 34h7l6 6h-8z" fill="#f29a2e"/><circle cx="62.5" cy="37" r="1.200" fill="#5a8a2a"/><g clip-path="url(#c2)"><path d="M335 12h15l3 3.500v4.500h-18z" fill="#9c9c9c"/><path d="M349 14h7l6 6h-8z" fill="#f2d3a2"/><circle cx="355.5" cy="17" r="1.100" fill="#ddd"/><rect x="348.2" y="21.3" width="1.700" height="1.600" fill="#b4b4b4"/><rect x="348.2" y="24" width="1.700" height="1.600" fill="#8c8c8c"/><rect x="348.2" y="26.7" width="1.700" height="1.600" fill="#555"/><rect x="348.2" y="29.4" width="1.700" height="1.600" fill="#333"/><path d="M335 32h15l3 3.500v4.500h-18z" fill="#000"/><path d="M349 34h7l6 6h-8z" fill="#f29a2e"/><circle cx="355.5" cy="37" r="1.200" fill="#5a8a2a"/></g><defs><clipPath id="c2"><rect x="320" y="0" width="32.500" height="60"/></clipPath><clipPath id="c3"><rect x="530" y="0" width="34.500" height="110"/></clipPath><clipPath id="c4"><rect x="530" y="50" width="29.500" height="60"/></clipPath></defs><defs><linearGradient id="ch473" x1="0" x2="1"><stop offset="0" stop-color="#3a3230"/><stop offset=".6" stop-color="#8a807c"/><stop offset="1" stop-color="#4a4240"/></linearGradient><linearGradient id="br473" x1="0" x2="0" y1="0" y2="1"><stop offset="0" stop-color="#7cc4ee"/><stop offset=".45" stop-color="#e8f6ff"/><stop offset="1" stop-color="#6ab8e8"/></linearGradient></defs><rect x="473" y="17" width="4.600" height="18" rx="1.500" fill="url(#ch473)"/><rect x="477.6" y="22" width="9" height="8.500" fill="url(#br473)"/><rect x="486" y="15" width="6" height="5" fill="#444"/><rect x="486.6" y="17" width="2.600" height="8" fill="#f4a030"/><path d="M489.5 22.5l2 -.5 1.500 2 2.500 -1.500 1 6 -3 1.500 -1 -2 -2.500 1.500z" fill="#9fd8f8"/><g clip-path="url(#c3)"><defs><linearGradient id="ch546" x1="0" x2="1"><stop offset="0" stop-color="#3a3230"/><stop offset=".6" stop-color="#8a807c"/><stop offset="1" stop-color="#4a4240"/></linearGradient><linearGradient id="br546" x1="0" x2="0" y1="0" y2="1"><stop offset="0" stop-color="#7cc4ee"/><stop offset=".45" stop-color="#e8f6ff"/><stop offset="1" stop-color="#6ab8e8"/></linearGradient></defs><rect x="546" y="17" width="4.600" height="18" rx="1.500" fill="url(#ch546)"/><rect x="550.6" y="22" width="9" height="8.500" fill="url(#br546)"/><rect x="559" y="15" width="6" height="5" fill="#444"/><rect x="559.6" y="17" width="2.600" height="8" fill="#f4a030"/><path d="M562.5 22.5l2 -.5 1.500 2 2.500 -1.500 1 6 -3 1.500 -1 -2 -2.500 1.500z" fill="#9fd8f8"/></g><path fill-rule="evenodd" fill="#2aa3d8" d="M222.16 74.74L222.16 76.26L220.94 76.37L220.68 77.51L221.73 78.14L221.07 79.51L219.92 79.08L219.20 79.99L219.87 81.02L218.68 81.96L217.83 81.08L216.78 81.59L216.95 82.80L215.47 83.14L215.08 81.97L213.92 81.97L213.53 83.14L212.05 82.80L212.22 81.59L211.17 81.08L210.32 81.96L209.13 81.02L209.80 79.99L209.08 79.08L207.93 79.51L207.27 78.14L208.32 77.51L208.06 76.37L206.84 76.26L206.84 74.74L208.06 74.63L208.32 73.49L207.27 72.86L207.93 71.49L209.08 71.92L209.80 71.01L209.13 69.98L210.32 69.04L211.17 69.92L212.22 69.41L212.05 68.20L213.53 67.86L213.92 69.03L215.08 69.03L215.47 67.86L216.95 68.20L216.78 69.41L217.83 69.92L218.68 69.04L219.87 69.98L219.20 71.01L219.92 71.92L221.07 71.49L221.73 72.86L220.68 73.49L220.94 74.63ZM218.70 75.50A4.2 4.2 0 1 0 210.30 75.50A4.2 4.2 0 1 0 218.70 75.50Z"/><path fill-rule="evenodd" fill="#66788f" d="M233.56 67.63L233.56 68.97L232.64 69.07L232.37 70.06L233.12 70.60L232.46 71.76L231.61 71.38L230.88 72.11L231.26 72.96L230.10 73.62L229.56 72.87L228.57 73.14L228.47 74.06L227.13 74.06L227.03 73.14L226.04 72.87L225.50 73.62L224.34 72.96L224.72 72.11L223.99 71.38L223.14 71.76L222.48 70.60L223.23 70.06L222.96 69.07L222.04 68.97L222.04 67.63L222.96 67.53L223.23 66.54L222.48 66.00L223.14 64.84L223.99 65.22L224.72 64.49L224.34 63.64L225.50 62.98L226.04 63.73L227.03 63.46L227.13 62.54L228.47 62.54L228.57 63.46L229.56 63.73L230.10 62.98L231.26 63.64L230.88 64.49L231.61 65.22L232.46 64.84L233.12 66.00L232.37 66.54L232.64 67.53ZM231.00 68.30A3.2 3.2 0 1 0 224.60 68.30A3.2 3.2 0 1 0 231.00 68.30Z"/><path fill-rule="evenodd" fill="#d9902f" d="M235.37 82.33L235.37 83.67L234.25 83.77L234.02 84.76L234.99 85.33L234.41 86.54L233.36 86.14L232.72 86.94L233.34 87.87L232.30 88.71L231.52 87.89L230.60 88.34L230.76 89.45L229.45 89.75L229.11 88.68L228.09 88.68L227.75 89.75L226.44 89.45L226.60 88.34L225.68 87.89L224.90 88.71L223.86 87.87L224.48 86.94L223.84 86.14L222.79 86.54L222.21 85.33L223.18 84.76L222.95 83.77L221.83 83.67L221.83 82.33L222.95 82.23L223.18 81.24L222.21 80.67L222.79 79.46L223.84 79.86L224.48 79.06L223.86 78.13L224.90 77.29L225.68 78.11L226.60 77.66L226.44 76.55L227.75 76.25L228.09 77.32L229.11 77.32L229.45 76.25L230.76 76.55L230.60 77.66L231.52 78.11L232.30 77.29L233.34 78.13L232.72 79.06L233.36 79.86L234.41 79.46L234.99 80.67L234.02 81.24L234.25 82.23ZM232.30 83.00A3.7 3.7 0 1 0 224.90 83.00A3.7 3.7 0 1 0 232.30 83.00Z"/><path fill-rule="evenodd" fill="#2aa3d8" d="M398.86 74.44L398.86 75.96L397.64 76.07L397.38 77.21L398.43 77.84L397.77 79.21L396.62 78.78L395.90 79.69L396.57 80.72L395.38 81.66L394.53 80.78L393.48 81.29L393.65 82.50L392.17 82.84L391.78 81.67L390.62 81.67L390.23 82.84L388.75 82.50L388.92 81.29L387.87 80.78L387.02 81.66L385.83 80.72L386.50 79.69L385.78 78.78L384.63 79.21L383.97 77.84L385.02 77.21L384.76 76.07L383.54 75.96L383.54 74.44L384.76 74.33L385.02 73.19L383.97 72.56L384.63 71.19L385.78 71.62L386.50 70.71L385.83 69.68L387.02 68.74L387.87 69.62L388.92 69.11L388.75 67.90L390.23 67.56L390.62 68.73L391.78 68.73L392.17 67.56L393.65 67.90L393.48 69.11L394.53 69.62L395.38 68.74L396.57 69.68L395.90 70.71L396.62 71.62L397.77 71.19L398.43 72.56L397.38 73.19L397.64 74.33ZM395.40 75.20A4.2 4.2 0 1 0 387.00 75.20A4.2 4.2 0 1 0 395.40 75.20Z"/><path fill-rule="evenodd" fill="#66788f" d="M410.26 67.33L410.26 68.67L409.34 68.77L409.07 69.76L409.82 70.30L409.16 71.46L408.31 71.08L407.58 71.81L407.96 72.66L406.80 73.32L406.26 72.57L405.27 72.84L405.17 73.76L403.83 73.76L403.73 72.84L402.74 72.57L402.20 73.32L401.04 72.66L401.42 71.81L400.69 71.08L399.84 71.46L399.18 70.30L399.93 69.76L399.66 68.77L398.74 68.67L398.74 67.33L399.66 67.23L399.93 66.24L399.18 65.70L399.84 64.54L400.69 64.92L401.42 64.19L401.04 63.34L402.20 62.68L402.74 63.43L403.73 63.16L403.83 62.24L405.17 62.24L405.27 63.16L406.26 63.43L406.80 62.68L407.96 63.34L407.58 64.19L408.31 64.92L409.16 64.54L409.82 65.70L409.07 66.24L409.34 67.23ZM407.70 68.00A3.2 3.2 0 1 0 401.30 68.00A3.2 3.2 0 1 0 407.70 68.00Z"/><path fill-rule="evenodd" fill="#d9902f" d="M412.07 82.03L412.07 83.37L410.95 83.47L410.72 84.46L411.69 85.03L411.11 86.24L410.06 85.84L409.42 86.64L410.04 87.57L409.00 88.41L408.22 87.59L407.30 88.04L407.46 89.15L406.15 89.45L405.81 88.38L404.79 88.38L404.45 89.45L403.14 89.15L403.30 88.04L402.38 87.59L401.60 88.41L400.56 87.57L401.18 86.64L400.54 85.84L399.49 86.24L398.91 85.03L399.88 84.46L399.65 83.47L398.53 83.37L398.53 82.03L399.65 81.93L399.88 80.94L398.91 80.37L399.49 79.16L400.54 79.56L401.18 78.76L400.56 77.83L401.60 76.99L402.38 77.81L403.30 77.36L403.14 76.25L404.45 75.95L404.79 77.02L405.81 77.02L406.15 75.95L407.46 76.25L407.30 77.36L408.22 77.81L409.00 76.99L410.04 77.83L409.42 78.76L410.06 79.56L411.11 79.16L411.69 80.37L410.72 80.94L410.95 81.93ZM409.00 82.70A3.7 3.7 0 1 0 401.60 82.70A3.7 3.7 0 1 0 409.00 82.70Z"/><g clip-path="url(#c4)"><path fill-rule="evenodd" fill="#2aa3d8" d="M562.16 74.24L562.16 75.76L560.94 75.87L560.68 77.01L561.73 77.64L561.07 79.01L559.92 78.58L559.20 79.49L559.87 80.52L558.68 81.46L557.83 80.58L556.78 81.09L556.95 82.30L555.47 82.64L555.08 81.47L553.92 81.47L553.53 82.64L552.05 82.30L552.22 81.09L551.17 80.58L550.32 81.46L549.13 80.52L549.80 79.49L549.08 78.58L547.93 79.01L547.27 77.64L548.32 77.01L548.06 75.87L546.84 75.76L546.84 74.24L548.06 74.13L548.32 72.99L547.27 72.36L547.93 70.99L549.08 71.42L549.80 70.51L549.13 69.48L550.32 68.54L551.17 69.42L552.22 68.91L552.05 67.70L553.53 67.36L553.92 68.53L555.08 68.53L555.47 67.36L556.95 67.70L556.78 68.91L557.83 69.42L558.68 68.54L559.87 69.48L559.20 70.51L559.92 71.42L561.07 70.99L561.73 72.36L560.68 72.99L560.94 74.13ZM558.70 75.00A4.2 4.2 0 1 0 550.30 75.00A4.2 4.2 0 1 0 558.70 75.00Z"/><path fill-rule="evenodd" fill="#66788f" d="M573.56 67.13L573.56 68.47L572.64 68.57L572.37 69.56L573.12 70.10L572.46 71.26L571.61 70.88L570.88 71.61L571.26 72.46L570.10 73.12L569.56 72.37L568.57 72.64L568.47 73.56L567.13 73.56L567.03 72.64L566.04 72.37L565.50 73.12L564.34 72.46L564.72 71.61L563.99 70.88L563.14 71.26L562.48 70.10L563.23 69.56L562.96 68.57L562.04 68.47L562.04 67.13L562.96 67.03L563.23 66.04L562.48 65.50L563.14 64.34L563.99 64.72L564.72 63.99L564.34 63.14L565.50 62.48L566.04 63.23L567.03 62.96L567.13 62.04L568.47 62.04L568.57 62.96L569.56 63.23L570.10 62.48L571.26 63.14L570.88 63.99L571.61 64.72L572.46 64.34L573.12 65.50L572.37 66.04L572.64 67.03ZM571.00 67.80A3.2 3.2 0 1 0 564.60 67.80A3.2 3.2 0 1 0 571.00 67.80Z"/><path fill-rule="evenodd" fill="#d9902f" d="M575.37 81.83L575.37 83.17L574.25 83.27L574.02 84.26L574.99 84.83L574.41 86.04L573.36 85.64L572.72 86.44L573.34 87.37L572.30 88.21L571.52 87.39L570.60 87.84L570.76 88.95L569.45 89.25L569.11 88.18L568.09 88.18L567.75 89.25L566.44 88.95L566.60 87.84L565.68 87.39L564.90 88.21L563.86 87.37L564.48 86.44L563.84 85.64L562.79 86.04L562.21 84.83L563.18 84.26L562.95 83.27L561.83 83.17L561.83 81.83L562.95 81.73L563.18 80.74L562.21 80.17L562.79 78.96L563.84 79.36L564.48 78.56L563.86 77.63L564.90 76.79L565.68 77.61L566.60 77.16L566.44 76.05L567.75 75.75L568.09 76.82L569.11 76.82L569.45 75.75L570.76 76.05L570.60 77.16L571.52 77.61L572.30 76.79L573.34 77.63L572.72 78.56L573.36 79.36L574.41 78.96L574.99 80.17L574.02 80.74L574.25 81.73ZM572.30 82.50A3.7 3.7 0 1 0 564.90 82.50A3.7 3.7 0 1 0 572.30 82.50Z"/></g></svg>
<div class="r" style="left:359.4px;top:576px;width:1px;height:100px;background:#ffffff;"></div>
<div class="r" style="left:362.5px;top:576px;width:3.3px;height:100px;background:#3a3a00;"></div>
<div class="r" style="left:363px;top:576px;width:2.3px;height:100px;background:#e6e000;"></div>
<div class="r" style="left:462.2px;top:576px;width:3.6px;height:100px;background:#1a1a00;"></div>
<div class="r" style="left:462.7px;top:576px;width:2.6px;height:100px;background:#ffee00;"></div>
<div class="r" style="left:680.0px;top:576px;width:3.0px;height:100px;background:#4a4800;"></div>
<div class="r" style="left:680.5px;top:576px;width:2px;height:100px;background:#d6d210;"></div>
<div class="r" style="left:711.5px;top:576px;width:3.2px;height:100px;background:#3a3a00;"></div>
<div class="r" style="left:712px;top:576px;width:2.2px;height:100px;background:#ffff00;"></div>
<div class="r" style="left:797.1px;top:576px;width:3.2px;height:100px;background:#4a4800;"></div>
<div class="r" style="left:797.6px;top:576px;width:2.2px;height:100px;background:#d2ce14;"></div>
<div class="r" style="left:892.1px;top:576px;width:2.9px;height:100px;background:#3a3a00;"></div>
<div class="r" style="left:892.6px;top:576px;width:1.9px;height:100px;background:#cdc800;"></div>
<div class="r" style="left:924px;top:576px;width:1.2px;height:100px;background:#ffffff;"></div>
<div class="r" style="left:925.2px;top:576px;width:1px;height:100px;background:#ff1010;"></div>
<svg class="r" style="left:358px;top:560px;" width="14" height="16" viewBox="0 0 14 16"><path d="M1 1.200 12 8 1 14.800z" fill="#6bb445" stroke="#fff" stroke-width="1.200"/></svg>
<svg class="r" style="left:455px;top:561px;" width="19" height="15" viewBox="0 0 19 15"><path d="M1.200 1.200h16.400L9.400 14z" fill="#ffff00" stroke="#d8d8c0" stroke-width="1"/></svg>
<svg class="r" style="left:913px;top:560px;" width="13" height="16" viewBox="0 0 13 16"><path d="M13 1 2 8l11 6.500z" fill="#ff1010" stroke="#fff" stroke-width="1.200"/></svg>
<svg class="r" style="left:218px;top:678px;" width="17" height="17" viewBox="0 0 17 17"><circle cx="8.500" cy="8.500" r="7.500" fill="#f2f2f2"/><path d="M3.800 8.500h9.400" stroke="#2e2e2e" stroke-width="2.200"/></svg>
<svg class="r" style="left:333px;top:678px;" width="17" height="17" viewBox="0 0 17 17"><circle cx="8.500" cy="8.500" r="7.500" fill="#f2f2f2"/><path d="M3.800 8.500h9.400M8.500 3.800v9.400" stroke="#2e2e2e" stroke-width="2.200"/></svg>
<div class="r" style="left:248px;top:685px;width:81px;height:3px;background:#8a8a8a;"></div>
<div class="r" style="left:240px;top:678px;width:8px;height:16px;background:#8f8f8f;border-radius:1.500px;"></div>
<svg class="r" style="left:506px;top:679px;" width="18" height="15" viewBox="0 0 18 15"><path d="M1 1h15.600L8.800 14z" fill="#ffff00"/></svg>
<div class="t" style="left:534.00px;top:678.00px;font-size:13px;line-height:17px;color:#ffffff;transform:scaleX(0.8333);">2.02s</div>
<div class="r" style="left:583px;top:679px;width:1px;height:15px;background:#aaaaaa;"></div>
<div class="t" style="left:614.00px;top:678.00px;font-size:13px;line-height:17px;color:#ffffff;transform:scaleX(0.8904);">Temps de pièce :</div>
<div class="r" style="left:712px;top:676.5px;width:43px;height:19.5px;background:#bfbfbf;"></div>
<div class="t" style="left:717.70px;top:678.00px;font-size:13px;line-height:17px;color:#141414;transform:scaleX(0.8352);">10.89s</div>
<div class="r" style="left:775.5px;top:676.5px;width:60.0px;height:19.5px;background:#bfbfbf;"></div>
<div class="t" style="left:780.50px;top:678.00px;font-size:13px;line-height:17px;color:#141414;transform:scaleX(0.9425);">5.5 p/min</div>
<div class="r" style="left:856.5px;top:676.5px;width:60.0px;height:19.5px;background:#bfbfbf;"></div>
<div class="t" style="left:860.40px;top:678.00px;font-size:13px;line-height:17px;color:#141414;transform:scaleX(0.9241);">330.5 p/h</div>
</section>
<aside id="library" class="g">
<div class="r" style="left:930px;top:0px;width:350px;height:700px;background:#2b2b2b;"></div>
<svg class="r" style="left:1146px;top:8px;" width="18" height="17" viewBox="0 0 18 17"><path fill="#4f4f4f" d="M16 7.200a1 1 0 0 1 0 2.100h-5.600L6 15.600H4.600l2.600-6.300H3.600L2.200 11.500H1l.8-3.300L1 4.900h1.200l1.400 2.300h3.600L4.600.9H6l4.400 6.300z"/></svg>
<div class="r" style="left:1176px;top:9px;width:1px;height:15px;background:#5e5e5e;"></div>
<svg class="r" style="left:941px;top:28px;" width="36" height="36" viewBox="0 0 36 36"><circle cx="18" cy="18" r="16.050" fill="none" stroke="#7d7d7d" stroke-width="1.900"/><path d="M7.900 16H21L16 11.100H21.300L28.200 18.200 21.300 25.200H16L21 20.400H7.900Z" fill="#fff"/></svg>
<div class="t" style="left:993.40px;top:33.74px;font-size:19.5px;line-height:25px;color:#ffffff;transform:scaleX(1.0351);">Bibliothèque</div>
<div class="r" style="left:940px;top:85px;width:290px;height:31px;background:#9fcfe2;"></div>
<div class="r" style="left:1230px;top:85px;width:40px;height:31px;background:#d9d9d9;"></div>
<div class="t" style="left:945.00px;top:93.14px;font-size:12px;line-height:16px;color:#8fa7b0;transform:scaleX(0.9318);">Rechercher...</div>
<svg class="r" style="left:1230px;top:84px;" width="40" height="32" viewBox="0 0 40 32"><path d="M12.100 10.900H27.900L26.500 26.200H14Z" fill="#0b67b8"/><path d="M15.200 12.600h1.300l1.200 12h-1zM19.400 12.600h1.200l-.1 12h-1zM23.500 12.600h1.300l-1.500 12h-1z" fill="#c4d4e4"/><path d="M12.200 9.700 27.800 7.500" stroke="#0b67b8" stroke-width="1.700"/><path d="M17.800 8.400q.5-1.300 2.200-1.500l2.300-.3" fill="none" stroke="#0b67b8" stroke-width="1.200"/></svg>
<div class="t" style="left:949.00px;top:130.84px;font-size:12px;line-height:16px;color:#ffffff;transform:scaleX(0.9856);">Tornos</div>
<div class="r" style="left:940px;top:151px;width:183px;height:25px;background:#1b6e93;"></div>
<div class="t" style="left:949.00px;top:155.84px;font-size:12px;line-height:16px;color:#ffffff;transform:scaleX(0.9995);">Mes opérations</div>
<div class="r" style="left:1128px;top:131px;width:1px;height:40px;background:#1f4a5c;"></div>
<div class="r" style="left:1140px;top:126px;width:40px;height:40px;background:#808080;box-sizing:border-box;border:1.500px solid #b4b4b4;border-radius:3px;"></div>
<div class="t" style="left:1151.00px;top:139.36px;font-size:10.5px;line-height:14px;color:#ffffff;transform:scaleX(1.0575);font-weight:700;">MM</div>
<div class="r" style="left:1185px;top:126px;width:40px;height:40px;background:#2e2e2e;box-sizing:border-box;border:1.200px solid #c4c4c4;border-radius:3.500px;"></div>
<div class="r" style="left:1230px;top:126px;width:40px;height:40px;background:#2e2e2e;box-sizing:border-box;border:1.200px solid #c4c4c4;border-radius:3.500px;"></div>
<svg class="r" style="left:1185px;top:126px;" width="40" height="40" viewBox="0 0 40 40"><g transform="translate(10,7.5) scale(0.84)"><path d="M1.500 13 11 13 12 17V27.500L6 26.500 1 24z" fill="#64676a"/><path d="M1.200 20 12 22.500V28L5 26.800 1 24z" fill="#3c3f42"/><path d="M12 17.500Q17 19 21.500 17L21 26.500 12 28.500z" fill="#3b3d40"/><path d="M2.500 13V6Q3 3 7 2.500L11.500 3V13z" fill="#e6e6e6"/><path d="M10 13V4Q11 1 15 1.200 21 1.500 22.800 7V15Q18 18.500 12 17z" fill="#f4f4f4"/><path d="M10.500 13 12 17Q18 18.500 22.800 15V12Q17 15 10.500 11z" fill="#c4c4c4"/><path d="M13.500 5.500h2v3.500h-2zM17 6h2.800v3H17zM14 3l3-.8.500 1.500-3 .8z" fill="#3a3a3a"/><path d="M5 4.500h1.600v4.500H5zM8 3.500h1.500v6H8z" fill="#8c8c8c"/><rect x="3.300" y="6.300" width="1.200" height="1.200" fill="#f08050"/><path d="M9.800 2.800 11.200 2.800 11.200 14 9.800 13z" fill="#555"/></g></svg>
<svg class="r" style="left:1230px;top:126px;" width="40" height="40" viewBox="0 0 40 40"><rect x="10.900" y="14.800" width="1.200" height="10.200" fill="#8a7a70"/><rect x="12.500" y="14.800" width="1.300" height="10.200" fill="#6e625c"/><rect x="13.800" y="17.600" width="6.100" height="5.100" fill="#8fd0f5"/><rect x="13.800" y="19" width="6.100" height="1.500" fill="#d0ecff"/><rect x="19" y="14.800" width="1.100" height="4.200" fill="#f4a020"/><rect x="20.100" y="14.600" width="1.400" height="1" fill="#555"/><path d="M21 18h1.500q1.800.5 1.800 2.300t-1.800 2.400H21z" fill="#a8dcf8"/></svg>
<div class="r" style="left:960px;top:196px;width:290px;height:1px;background:#1f4a5c;"></div>
<svg class="r" style="left:955px;top:210px;" width="45" height="45" viewBox="0 0 45 45"><path fill-rule="evenodd" fill="#2bb4e0" d="M23.15 21.08L23.15 23.12L21.72 23.29L21.36 24.85L22.58 25.63L21.69 27.46L20.33 27.00L19.33 28.25L20.08 29.48L18.50 30.75L17.46 29.74L16.03 30.43L16.17 31.87L14.19 32.32L13.70 30.96L12.10 30.96L11.61 32.32L9.63 31.87L9.77 30.43L8.34 29.74L7.30 30.75L5.72 29.48L6.47 28.25L5.47 27.00L4.11 27.46L3.22 25.63L4.44 24.85L4.08 23.29L2.65 23.12L2.65 21.08L4.08 20.91L4.44 19.35L3.22 18.57L4.11 16.74L5.47 17.20L6.47 15.95L5.72 14.72L7.30 13.45L8.34 14.46L9.77 13.77L9.63 12.33L11.61 11.88L12.10 13.24L13.70 13.24L14.19 11.88L16.17 12.33L16.03 13.77L17.46 14.46L18.50 13.45L20.08 14.72L19.33 15.95L20.33 17.20L21.69 16.74L22.58 18.57L21.36 19.35L21.72 20.91ZM18.50 22.10A5.6 5.6 0 1 0 7.30 22.10A5.6 5.6 0 1 0 18.50 22.10Z"/><path fill-rule="evenodd" fill="#6e93a8" d="M37.95 12.55L37.95 14.25L36.73 14.38L36.41 15.66L37.44 16.34L36.65 17.85L35.50 17.40L34.63 18.38L35.22 19.46L33.82 20.43L33.01 19.50L31.79 19.96L31.80 21.19L30.12 21.40L29.84 20.20L28.53 20.04L27.97 21.14L26.39 20.54L26.70 19.34L25.62 18.60L24.61 19.31L23.48 18.04L24.31 17.13L23.70 15.96L22.48 16.13L22.07 14.48L23.23 14.06L23.23 12.74L22.07 12.32L22.48 10.67L23.70 10.84L24.31 9.67L23.48 8.76L24.61 7.49L25.62 8.20L26.70 7.46L26.39 6.26L27.97 5.66L28.53 6.76L29.84 6.60L30.12 5.40L31.80 5.61L31.79 6.84L33.01 7.30L33.82 6.37L35.22 7.34L34.63 8.42L35.50 9.40L36.65 8.95L37.44 10.46L36.41 11.14L36.73 12.42ZM34.40 13.40A4.4 4.4 0 1 0 25.60 13.40A4.4 4.4 0 1 0 34.40 13.40Z"/><path fill-rule="evenodd" fill="#e0a82e" d="M40.06 30.90L40.06 32.70L38.73 32.85L38.42 34.21L39.55 34.92L38.77 36.54L37.51 36.10L36.64 37.19L37.35 38.32L35.94 39.44L35.00 38.50L33.74 39.10L33.89 40.43L32.14 40.83L31.70 39.57L30.30 39.57L29.86 40.83L28.11 40.43L28.26 39.10L27.00 38.50L26.06 39.44L24.65 38.32L25.36 37.19L24.49 36.10L23.23 36.54L22.45 34.92L23.58 34.21L23.27 32.85L21.94 32.70L21.94 30.90L23.27 30.75L23.58 29.39L22.45 28.68L23.23 27.06L24.49 27.50L25.36 26.41L24.65 25.28L26.06 24.16L27.00 25.10L28.26 24.50L28.11 23.17L29.86 22.77L30.30 24.03L31.70 24.03L32.14 22.77L33.89 23.17L33.74 24.50L35.00 25.10L35.94 24.16L37.35 25.28L36.64 26.41L37.51 27.50L38.77 27.06L39.55 28.68L38.42 29.39L38.73 30.75ZM35.90 31.80A4.9 4.9 0 1 0 26.10 31.80A4.9 4.9 0 1 0 35.90 31.80Z"/></svg>
<div class="t" style="left:1014.20px;top:218.67px;font-size:12.5px;line-height:16px;color:#ffffff;transform:scaleX(0.9433);white-space:pre;">Polygonage 4 plats - 2 outils  T21</div>
<div class="t" style="left:1019.40px;top:234.06px;font-size:10.5px;line-height:14px;color:#f0f0f0;transform:scaleX(0.9089);font-style:italic;">MM</div>
<div class="t" style="left:1048.00px;top:234.06px;font-size:10.5px;line-height:14px;color:#f0f0f0;font-style:italic;">-</div>
<div class="t" style="left:1060.40px;top:234.06px;font-size:10.5px;line-height:14px;color:#f0f0f0;transform:scaleX(0.9138);font-style:italic;">Auteur :</div>
<div class="t" style="left:1099.80px;top:234.06px;font-size:10.5px;line-height:14px;color:#f0f0f0;transform:scaleX(0.9435);font-style:italic;">bertholdj</div>
<div class="r" style="left:944px;top:253px;width:322px;height:1px;background:#e6e6e6;"></div>
<svg class="r" style="left:1228px;top:218px;" width="27" height="32" viewBox="0 0 27 32"><g transform="translate(1.5,0.8) scale(0.98)"><path d="M1.500 13 11 13 12 17V27.500L6 26.500 1 24z" fill="#64676a"/><path d="M1.200 20 12 22.500V28L5 26.800 1 24z" fill="#3c3f42"/><path d="M12 17.500Q17 19 21.500 17L21 26.500 12 28.500z" fill="#3b3d40"/><path d="M2.500 13V6Q3 3 7 2.500L11.500 3V13z" fill="#e6e6e6"/><path d="M10 13V4Q11 1 15 1.200 21 1.500 22.800 7V15Q18 18.500 12 17z" fill="#f4f4f4"/><path d="M10.500 13 12 17Q18 18.500 22.800 15V12Q17 15 10.500 11z" fill="#c4c4c4"/><path d="M13.500 5.500h2v3.500h-2zM17 6h2.800v3H17zM14 3l3-.8.500 1.500-3 .8z" fill="#3a3a3a"/><path d="M5 4.500h1.600v4.500H5zM8 3.500h1.500v6H8z" fill="#8c8c8c"/><rect x="3.300" y="6.300" width="1.200" height="1.200" fill="#f08050"/><path d="M9.800 2.800 11.200 2.800 11.200 14 9.800 13z" fill="#555"/></g></svg>
<svg class="r" style="left:955px;top:262px;" width="45" height="45" viewBox="0 0 45 45"><path fill-rule="evenodd" fill="#2bb4e0" d="M23.15 21.08L23.15 23.12L21.72 23.29L21.36 24.85L22.58 25.63L21.69 27.46L20.33 27.00L19.33 28.25L20.08 29.48L18.50 30.75L17.46 29.74L16.03 30.43L16.17 31.87L14.19 32.32L13.70 30.96L12.10 30.96L11.61 32.32L9.63 31.87L9.77 30.43L8.34 29.74L7.30 30.75L5.72 29.48L6.47 28.25L5.47 27.00L4.11 27.46L3.22 25.63L4.44 24.85L4.08 23.29L2.65 23.12L2.65 21.08L4.08 20.91L4.44 19.35L3.22 18.57L4.11 16.74L5.47 17.20L6.47 15.95L5.72 14.72L7.30 13.45L8.34 14.46L9.77 13.77L9.63 12.33L11.61 11.88L12.10 13.24L13.70 13.24L14.19 11.88L16.17 12.33L16.03 13.77L17.46 14.46L18.50 13.45L20.08 14.72L19.33 15.95L20.33 17.20L21.69 16.74L22.58 18.57L21.36 19.35L21.72 20.91ZM18.50 22.10A5.6 5.6 0 1 0 7.30 22.10A5.6 5.6 0 1 0 18.50 22.10Z"/><path fill-rule="evenodd" fill="#6e93a8" d="M37.95 12.55L37.95 14.25L36.73 14.38L36.41 15.66L37.44 16.34L36.65 17.85L35.50 17.40L34.63 18.38L35.22 19.46L33.82 20.43L33.01 19.50L31.79 19.96L31.80 21.19L30.12 21.40L29.84 20.20L28.53 20.04L27.97 21.14L26.39 20.54L26.70 19.34L25.62 18.60L24.61 19.31L23.48 18.04L24.31 17.13L23.70 15.96L22.48 16.13L22.07 14.48L23.23 14.06L23.23 12.74L22.07 12.32L22.48 10.67L23.70 10.84L24.31 9.67L23.48 8.76L24.61 7.49L25.62 8.20L26.70 7.46L26.39 6.26L27.97 5.66L28.53 6.76L29.84 6.60L30.12 5.40L31.80 5.61L31.79 6.84L33.01 7.30L33.82 6.37L35.22 7.34L34.63 8.42L35.50 9.40L36.65 8.95L37.44 10.46L36.41 11.14L36.73 12.42ZM34.40 13.40A4.4 4.4 0 1 0 25.60 13.40A4.4 4.4 0 1 0 34.40 13.40Z"/><path fill-rule="evenodd" fill="#e0a82e" d="M40.06 30.90L40.06 32.70L38.73 32.85L38.42 34.21L39.55 34.92L38.77 36.54L37.51 36.10L36.64 37.19L37.35 38.32L35.94 39.44L35.00 38.50L33.74 39.10L33.89 40.43L32.14 40.83L31.70 39.57L30.30 39.57L29.86 40.83L28.11 40.43L28.26 39.10L27.00 38.50L26.06 39.44L24.65 38.32L25.36 37.19L24.49 36.10L23.23 36.54L22.45 34.92L23.58 34.21L23.27 32.85L21.94 32.70L21.94 30.90L23.27 30.75L23.58 29.39L22.45 28.68L23.23 27.06L24.49 27.50L25.36 26.41L24.65 25.28L26.06 24.16L27.00 25.10L28.26 24.50L28.11 23.17L29.86 22.77L30.30 24.03L31.70 24.03L32.14 22.77L33.89 23.17L33.74 24.50L35.00 25.10L35.94 24.16L37.35 25.28L36.64 26.41L37.51 27.50L38.77 27.06L39.55 28.68L38.42 29.39L38.73 30.75ZM35.90 31.80A4.9 4.9 0 1 0 26.10 31.80A4.9 4.9 0 1 0 35.90 31.80Z"/></svg>
<div class="t" style="left:1014.20px;top:270.67px;font-size:12.5px;line-height:16px;color:#ffffff;transform:scaleX(0.8033);white-space:pre;">PRISE DE PIECE</div>
<div class="t" style="left:1019.40px;top:286.06px;font-size:10.5px;line-height:14px;color:#f0f0f0;transform:scaleX(0.9089);font-style:italic;">MM</div>
<div class="t" style="left:1048.00px;top:286.06px;font-size:10.5px;line-height:14px;color:#f0f0f0;font-style:italic;">-</div>
<div class="t" style="left:1060.40px;top:286.06px;font-size:10.5px;line-height:14px;color:#f0f0f0;transform:scaleX(0.9138);font-style:italic;">Auteur :</div>
<div class="t" style="left:1099.80px;top:286.06px;font-size:10.5px;line-height:14px;color:#f0f0f0;transform:scaleX(0.9435);font-style:italic;">bertholdj</div>
<div class="r" style="left:944px;top:305px;width:322px;height:1px;background:#e6e6e6;"></div>
<svg class="r" style="left:1228px;top:270px;" width="27" height="32" viewBox="0 0 27 32"><g transform="translate(1.5,0.8) scale(0.98)"><path d="M1.500 13 11 13 12 17V27.500L6 26.500 1 24z" fill="#64676a"/><path d="M1.200 20 12 22.500V28L5 26.800 1 24z" fill="#3c3f42"/><path d="M12 17.500Q17 19 21.500 17L21 26.500 12 28.500z" fill="#3b3d40"/><path d="M2.500 13V6Q3 3 7 2.500L11.500 3V13z" fill="#e6e6e6"/><path d="M10 13V4Q11 1 15 1.200 21 1.500 22.800 7V15Q18 18.500 12 17z" fill="#f4f4f4"/><path d="M10.500 13 12 17Q18 18.500 22.800 15V12Q17 15 10.500 11z" fill="#c4c4c4"/><path d="M13.500 5.500h2v3.500h-2zM17 6h2.800v3H17zM14 3l3-.8.500 1.500-3 .8z" fill="#3a3a3a"/><path d="M5 4.500h1.600v4.500H5zM8 3.500h1.500v6H8z" fill="#8c8c8c"/><rect x="3.300" y="6.300" width="1.200" height="1.200" fill="#f08050"/><path d="M9.800 2.800 11.200 2.800 11.200 14 9.800 13z" fill="#555"/></g></svg>
<div class="r" style="left:960px;top:563px;width:290px;height:1px;background:#25485a;"></div>
</aside>
<div class="r" style="left:0;top:0;width:930px;height:1px;background:#222b2e"></div><div class="r" style="left:930px;top:0;width:350px;height:1px;background:#232323"></div>
<div class="r" style="left:0;top:0;width:1px;height:700px;background:#262626"></div><div class="r" style="left:1279px;top:0;width:1px;height:700px;background:#252525"></div>
<div class="r" style="left:0;top:699px;width:1280px;height:1px;background:#262626"></div>
</div></body></html>
